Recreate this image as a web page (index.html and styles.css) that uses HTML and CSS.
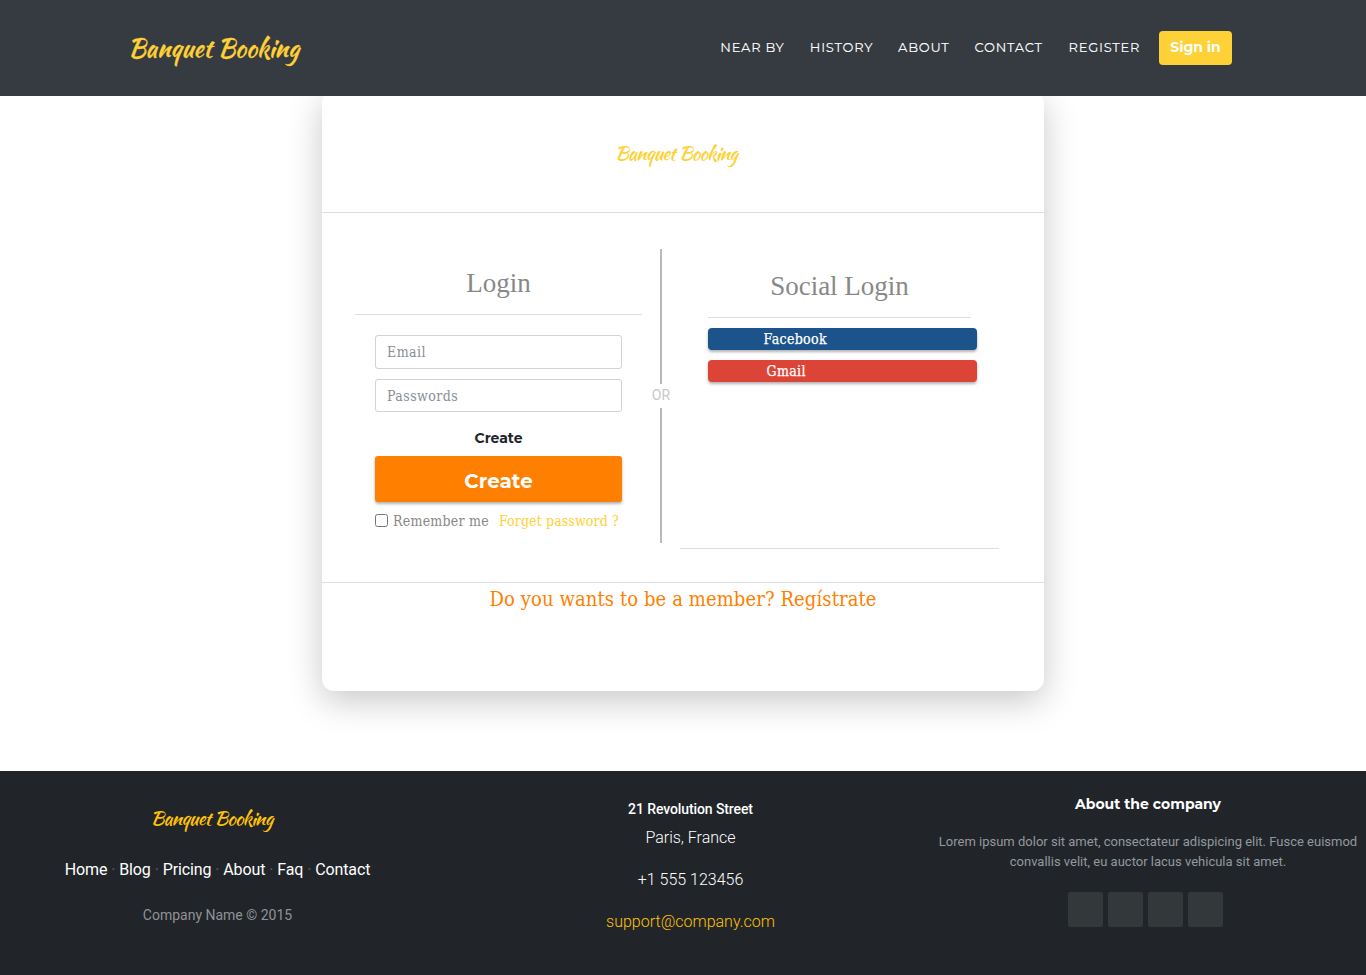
FILE: index.html
```html
<!DOCTYPE html>
<html lang="en">
<head>
<meta charset="utf-8">
<title>Banquet Booking</title>
<link rel="stylesheet" href="styles.css">
</head>
<body>
<header class="topbar">
  <a class="brand script">Banquet Booking</a>
  <nav class="nav">
    <a class="n1">NEAR BY</a><a class="n2">HISTORY</a><a class="n3">ABOUT</a><a class="n4">CONTACT</a><a class="n5">REGISTER</a>
    <button class="signin">Sign in</button>
  </nav>
</header>
<main class="page">
  <section class="card">
    <div class="card-head script">Banquet Booking</div>
    <div class="card-body">
      <form class="login">
        <h2>Login</h2>
        <div class="fields">
          <input type="text" placeholder="Email">
          <input class="pass" type="text" placeholder="Passwords">
          <div class="caption">Create</div>
          <button type="button" class="create">Create</button>
          <div class="options"><input type="checkbox"><span class="remember">Remember me</span><a class="forget">Forget password ?</a></div>
        </div>
      </form>
      <div class="divider"><i class="upper"></i><span>OR</span><i class="lower"></i></div>
      <div class="social">
        <h2>Social Login</h2>
        <a class="btn facebook">Facebook</a>
        <a class="btn gmail">Gmail</a>
        <div class="rule"></div>
      </div>
    </div>
    <div class="card-foot"><a>Do you wants to be a member? Regístrate</a></div>
  </section>
</main>
<footer class="footer">
  <div class="col left">
    <div class="foot-brand script">Banquet Booking</div>
    <p class="links"><a>Home</a><i>·</i><a>Blog</a><i>·</i><a>Pricing</a><i>·</i><a>About</a><i>·</i><a>Faq</a><i>·</i><a>Contact</a></p>
    <p class="copy">Company Name © 2015</p>
  </div>
  <div class="col center">
    <p class="street">21 Revolution Street</p>
    <p class="city">Paris, France</p>
    <p class="phone">+1 555 123456</p>
    <p class="mail">support@company.com</p>
  </div>
  <div class="col right">
    <h3>About the company</h3>
    <p class="about">Lorem ipsum dolor sit amet, consectateur adispicing elit. Fusce euismod<br>convallis velit, eu auctor lacus vehicula sit amet.</p>
    <div class="squares"><i></i><i></i><i></i><i></i></div>
  </div>
</footer>
</body>
</html>
```
FILE: styles.css
```css
* { box-sizing: border-box; }
body { margin: 0; background: #fff; font-family: Roboto, sans-serif; height: 975px; overflow: hidden; }
p, h2, h3 { margin: 0; }
a, span, p, h2, h3, button { white-space: nowrap; }
.script { font-family: "Kaushan Script", cursive; font-weight: 400; color: #fed136; font-size: 19px; letter-spacing: -.7px; }

.topbar { position: relative; z-index: 2; height: 96px; background: #363a41; display: flex; justify-content: space-between; padding: 0 134px 0 128px; }
.brand { font-size: 24.5px; letter-spacing: 0; line-height: 42px; padding-top: 27px; -webkit-text-stroke: .3px #fed136; }
.nav { display: flex; align-items: flex-start; padding-top: 31px; font: 400 13px/33px Montserrat, Inter, sans-serif; color: #fff; }
.nav a { letter-spacing: .75px; flex: none; -webkit-text-stroke: .1px #fff; }
.n1 { width: 89.5px; }
.n2 { width: 88.3px; }
.n3 { width: 76.5px; }
.n4 { width: 94px; }
.n5 { width: 90.4px; }
.signin { width: 73px; height: 34px; border: 0; border-radius: 4px; padding: 0 0 2px; background: #fed136; color: #fff; font: 700 14px/32px Montserrat, Inter, sans-serif; }

.page { height: 675px; display: flex; justify-content: center; align-items: flex-start; }
.card { width: 722px; height: 600px; margin-top: -5px; background: #fff; border-radius: 12px; box-shadow: 0 10px 34px rgba(0,0,0,.22); }
.card-head { height: 122px; border-bottom: 1px solid #dedede; padding: 47px 0 0 293px; line-height: 30px; }
.card-body { height: 369px; display: flex; align-items: flex-start; padding: 36px 0 0 33px; }
.card h2 { font: 400 27px/36px "Liberation Serif", serif; color: #888; text-align: center; border-bottom: 1px solid #dedede; }
.login { width: 287px; }
.login h2 { height: 66px; padding-top: 16px; }
.fields { padding: 20px 20px 0; font-family: "Roboto Slab", "DejaVu Serif Condensed", "DejaVu Serif", serif; }
.fields input[type=text] { display: block; width: 247px; height: 34px; border: 1px solid #ced4da; border-radius: 3px; padding: 0 11px 1px; margin: 0 0 10px; letter-spacing: .45px; font: 14px "Roboto Slab", "DejaVu Serif Condensed", "DejaVu Serif", serif; }
.fields input.pass { height: 33px; margin: 0; padding-bottom: 0; }
.fields input::placeholder { color: #868e96; opacity: 1; }
.caption { height: 44px; padding-top: 16px; text-align: center; color: #212529; font: 700 14px/20px Montserrat, Inter, sans-serif; }
.create { display: block; width: 247px; height: 46px; border: 0; border-radius: 3px; padding: 3px 0 0; background: #ff8000; color: #fff; box-shadow: 0 2px 3px rgba(0,0,0,.3); font: 700 20px Montserrat, Inter, sans-serif; }
.options { display: flex; align-items: center; height: 37px; font-size: 14px; letter-spacing: .25px; color: #888; }
.options input { width: 13px; height: 13px; margin: 0 5px 0 0; }
.remember { width: 106px; }
.forget { color: #fed136; letter-spacing: .12px; }
.divider { width: 38px; height: 294px; display: flex; flex-direction: column; align-items: center; color: #c8c8c8; font-size: 14px; line-height: 22px; }
.divider i { width: 2px; background: #b9b9b9; }
.divider span { height: 24px; }
.upper { height: 135px; }
.lower { flex: 1; }
.social { width: 319px; padding-left: 28px; }
.social h2 { width: 263px; height: 69px; padding-top: 19px; margin-bottom: 10px; }
.btn { display: block; width: 269px; height: 22px; margin-bottom: 10px; border-radius: 4px; color: #fff; box-shadow: 0 2px 3px rgba(0,0,0,.3); letter-spacing: .35px; -webkit-text-stroke: .25px #fff; font: 14px/22px "Roboto Slab", "DejaVu Serif Condensed", "DejaVu Serif", serif; }
.facebook { background: #1b538a; padding-left: 55.5px; }
.gmail { background: #dc4437; padding-left: 58.5px; }
.rule { width: 319px; height: 1px; margin: 166px 0 0 -28px; background: #dedede; }
.card-foot { border-top: 1px solid #dedede; text-align: center; color: #ff8000; letter-spacing: .1px; font: 20px/32px "Roboto Slab", "DejaVu Serif Condensed", "DejaVu Serif", serif; }

.footer { height: 204px; background: #212529; color: #fff; display: flex; }
.col { text-align: center; }
.left { width: 435px; }
.foot-brand { margin: 32px 0 0 -12px; line-height: 30px; color: #ffc107; }
.links { display: flex; justify-content: center; font-size: 16px; line-height: 24px; margin-top: 25px; font-weight: 400; letter-spacing: -.13px; }
.links i { width: 12px; font-style: normal; color: #5b6064; }
.copy { margin-top: 21px; font-size: 14px; line-height: 24px; color: #8f9296; }
.center { width: 511px; font-weight: 300; font-size: 16px; line-height: 24px; }
.street { margin-top: 26px; font-size: 14px; font-weight: 500; letter-spacing: -.1px; }
.city { margin-top: 5px; }
.phone { margin-top: 18px; }
.mail { margin-top: 18px; color: #ffc107; }
.right { width: 404px; display: flex; flex-direction: column; align-items: center; }
.right h3 { margin-top: 21px; font: 700 14px/24px Montserrat, Inter, sans-serif; }
.about { margin: 16px 0 0; font-size: 13px; line-height: 20px; color: #92999f; }
.squares { display: flex; gap: 5px; margin: 20px 5px 0 0; }
.squares i { width: 35px; height: 35px; border-radius: 2px; background: #33383b; }
```
